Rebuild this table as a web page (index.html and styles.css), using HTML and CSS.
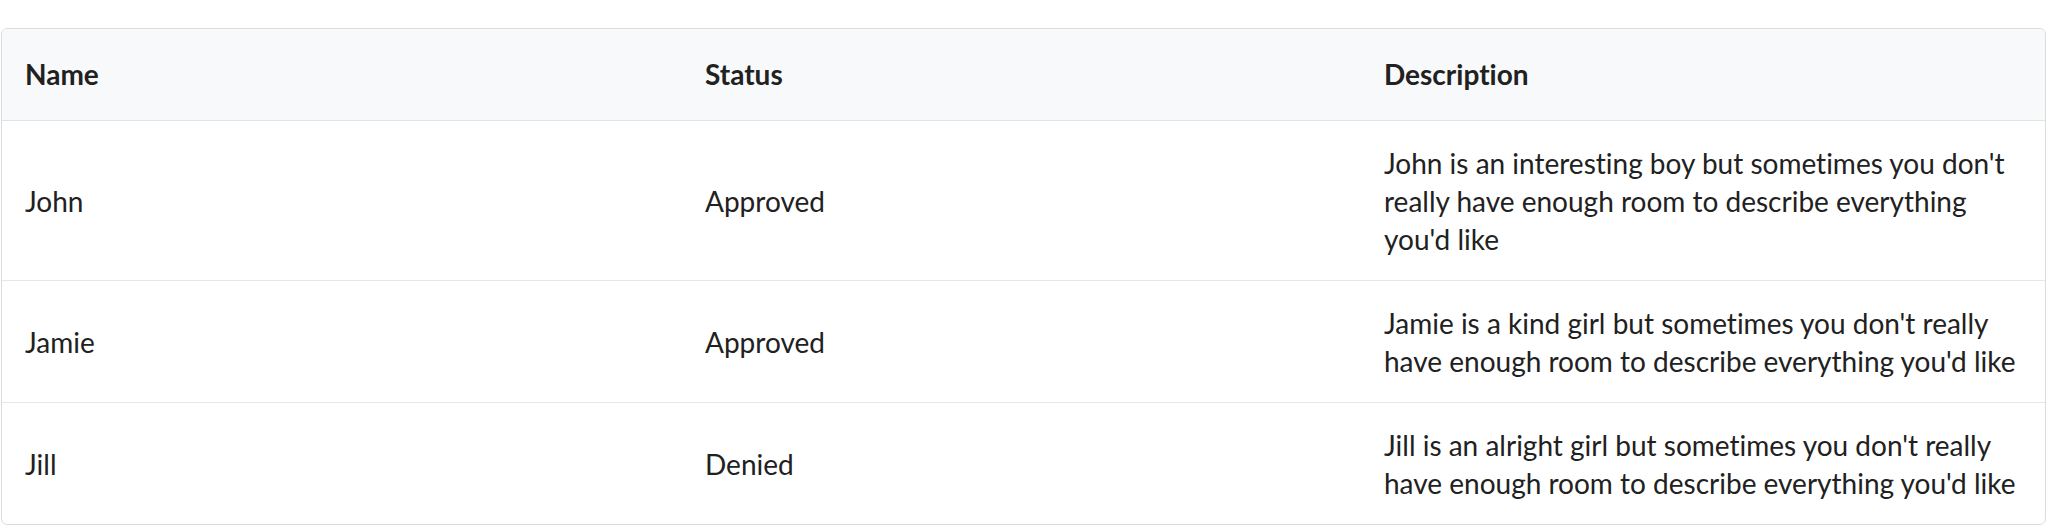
FILE: index.html
```html
<!DOCTYPE html>
<html lang="en">
<head>
<meta charset="utf-8">
<title>Table</title>
<link rel="stylesheet" href="styles.css">
</head>
<body>
<div class="wrap">
  <table class="tbl">
    <colgroup>
      <col class="c1"><col class="c2"><col class="c3">
    </colgroup>
    <thead>
      <tr><th>Name</th><th>Status</th><th>Description</th></tr>
    </thead>
    <tbody>
      <tr><td>John</td><td>Approved</td><td>John is an interesting boy but sometimes you don't really have enough room to describe everything you'd like</td></tr>
      <tr><td>Jamie</td><td>Approved</td><td>Jamie is a kind girl but sometimes you don't really have enough room to describe everything you'd like</td></tr>
      <tr><td>Jill</td><td>Denied</td><td>Jill is an alright girl but sometimes you don't really have enough room to describe everything you'd like</td></tr>
    </tbody>
  </table>
</div>
</body>
</html>
```
FILE: styles.css
```css
html, body {
  margin: 0;
  padding: 0;
  background: #ffffff;
}
.wrap {
  padding: 28px 2px 0 1px;
}
.tbl {
  width: 100%;
  table-layout: fixed;
  border-collapse: separate;
  border-spacing: 0;
  border: 1px solid #dcdcdc;
  border-radius: 6px;
  overflow: hidden;
  font-family: Lato, "Noto Sans", sans-serif;
  font-size: 28px;
  line-height: 38px;
  color: #212121;
  font-variant-ligatures: none;
  font-feature-settings: "liga" 0, "clig" 0;
}
.c1 { width: 680px; }
.c2 { width: 679px; }
.c3 { width: auto; }
.tbl th {
  text-align: left;
  font-weight: 700;
  background: #f8f9fa;
  padding: 26px 24px 27px 23px;
  border-bottom: 1px solid #e2e3e5;
}
.tbl td {
  padding: 23px 24px 22px 23px;
  vertical-align: middle;
  border-bottom: 1px solid #e6e6e6;
}
.tbl tbody tr:last-child td {
  border-bottom: none;
}
```
